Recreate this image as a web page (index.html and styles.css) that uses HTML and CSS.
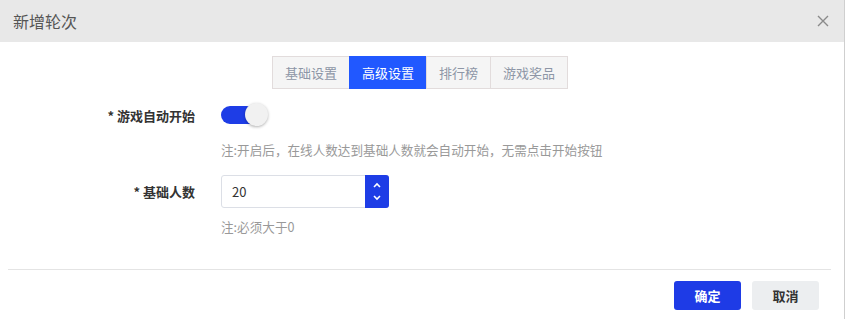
FILE: index.html
```html
<!DOCTYPE html>
<html lang="zh">
<head>
<meta charset="utf-8">
<title>新增轮次</title>
<link rel="stylesheet" href="styles.css">
</head>
<body>
<div class="dialog">
  <div class="header">
    <span class="title">新增轮次</span>
    <span class="close" aria-label="关闭">
      <svg width="12" height="12" viewBox="0 0 12 12"><path d="M1 1 L11 11 M11 1 L1 11" stroke="#8a8a8a" stroke-width="1.4" fill="none"/></svg>
    </span>
  </div>
  <div class="tabs">
    <span class="tab">基础设置</span>
    <span class="tab active">高级设置</span>
    <span class="tab">排行榜</span>
    <span class="tab">游戏奖品</span>
  </div>
  <div class="form">
    <div class="row row-switch">
      <label class="label">* 游戏自动开始</label>
      <div class="control">
        <span class="switch"><span class="knob"></span></span>
      </div>
    </div>
    <div class="hint hint1">注:开启后，在线人数达到基础人数就会自动开始，无需点击开始按钮</div>
    <div class="row row-input">
      <label class="label">* 基础人数</label>
      <div class="control">
        <div class="number">
          <span class="value">20</span>
          <span class="spin">
            <svg width="10" height="6" viewBox="0 0 10 6"><path d="M2 5 L5 2 L8 5" stroke="#fff" stroke-width="1.6" fill="none"/></svg>
            <svg width="10" height="6" viewBox="0 0 10 6"><path d="M2 1 L5 4 L8 1" stroke="#fff" stroke-width="1.6" fill="none"/></svg>
          </span>
        </div>
      </div>
    </div>
    <div class="hint hint2">注:必须大于0</div>
  </div>
  <div class="divider"></div>
  <div class="footer">
    <button class="btn primary">确定</button>
    <button class="btn default">取消</button>
  </div>
</div>
</body>
</html>
```
FILE: styles.css
```css
* { box-sizing: border-box; }
html, body { margin: 0; padding: 0; background: #fff; }
body {
  font-family: "Noto Sans CJK SC", "Noto Sans", sans-serif;
  font-size: 13px;
  color: #333;
}
.dialog {
  width: 845px;
  height: 319px;
  border-right: 1px solid #cfcfcf;
  background: #fff;
}
.header {
  height: 42px;
  background: #e8e8e8;
  display: flex;
  align-items: center;
  justify-content: space-between;
  padding: 0 15px 0 13px;
}
.title {
  font-size: 16px;
  color: #555;
}
.close {
  display: flex;
  width: 12px;
  height: 12px;
}
.tabs {
  display: flex;
  justify-content: center;
  margin-top: 14px;
  padding-right: 3px;
}
.tab {
  height: 33px;
  line-height: 31px;
  padding: 0 12px;
  border: 1px solid #e2dcdc;
  background: #f5f5f5;
  color: #8d96a6;
  font-size: 13px;
  margin-left: -1px;
}
.tab.active {
  background: #2158ff;
  border-color: #2158ff;
  color: #fff;
}
.form {
  margin-top: 14px;
}
.row {
  display: grid;
  grid-template-columns: 195px 1fr;
  column-gap: 26px;
  align-items: center;
}
.label {
  text-align: right;
  font-weight: bold;
  color: #333;
  font-size: 13px;
}
.row-switch { height: 24px; }
.switch {
  position: relative;
  display: block;
  width: 41px;
  height: 18px;
  border-radius: 9px;
  background: #1e3de6;
}
.knob {
  position: absolute;
  left: 24px;
  top: -3px;
  width: 23px;
  height: 23px;
  border-radius: 50%;
  background: #f1f1f1;
  box-shadow: 0 1px 3px rgba(0,0,0,0.3);
}
.hint {
  margin-left: 221px;
  color: #999;
  font-size: 12.6px;
  line-height: 20px;
}
.hint1 { margin-top: 13px; }
.row-input { margin-top: 15px; }
.number {
  width: 168px;
  height: 33px;
  border: 1px solid #dcdfe6;
  border-radius: 3px;
  display: flex;
  align-items: center;
  justify-content: space-between;
}
.value {
  padding-left: 10px;
  color: #333;
}
.spin {
  width: 24px;
  height: 33px;
  margin: -1px -1px -1px 0;
  background: #1e3de6;
  border-radius: 0 3px 3px 0;
  display: flex;
  flex-direction: column;
  align-items: center;
  justify-content: space-around;
  padding: 4px 0;
}
.hint2 { margin-top: 9px; }
.divider {
  margin: 32px 13px 0 8px;
  height: 1px;
  background: #e4e4e4;
}
.footer {
  display: flex;
  justify-content: flex-end;
  gap: 11px;
  padding: 11px 25px 0 0;
}
.btn {
  width: 67px;
  height: 29px;
  border: none;
  border-radius: 3px;
  font-family: inherit;
  font-size: 13px;
  font-weight: bold;
  padding: 0;
}
.btn.primary { background: #1e3be6; color: #fff; }
.btn.default { background: #eceef0; color: #333; }
```
